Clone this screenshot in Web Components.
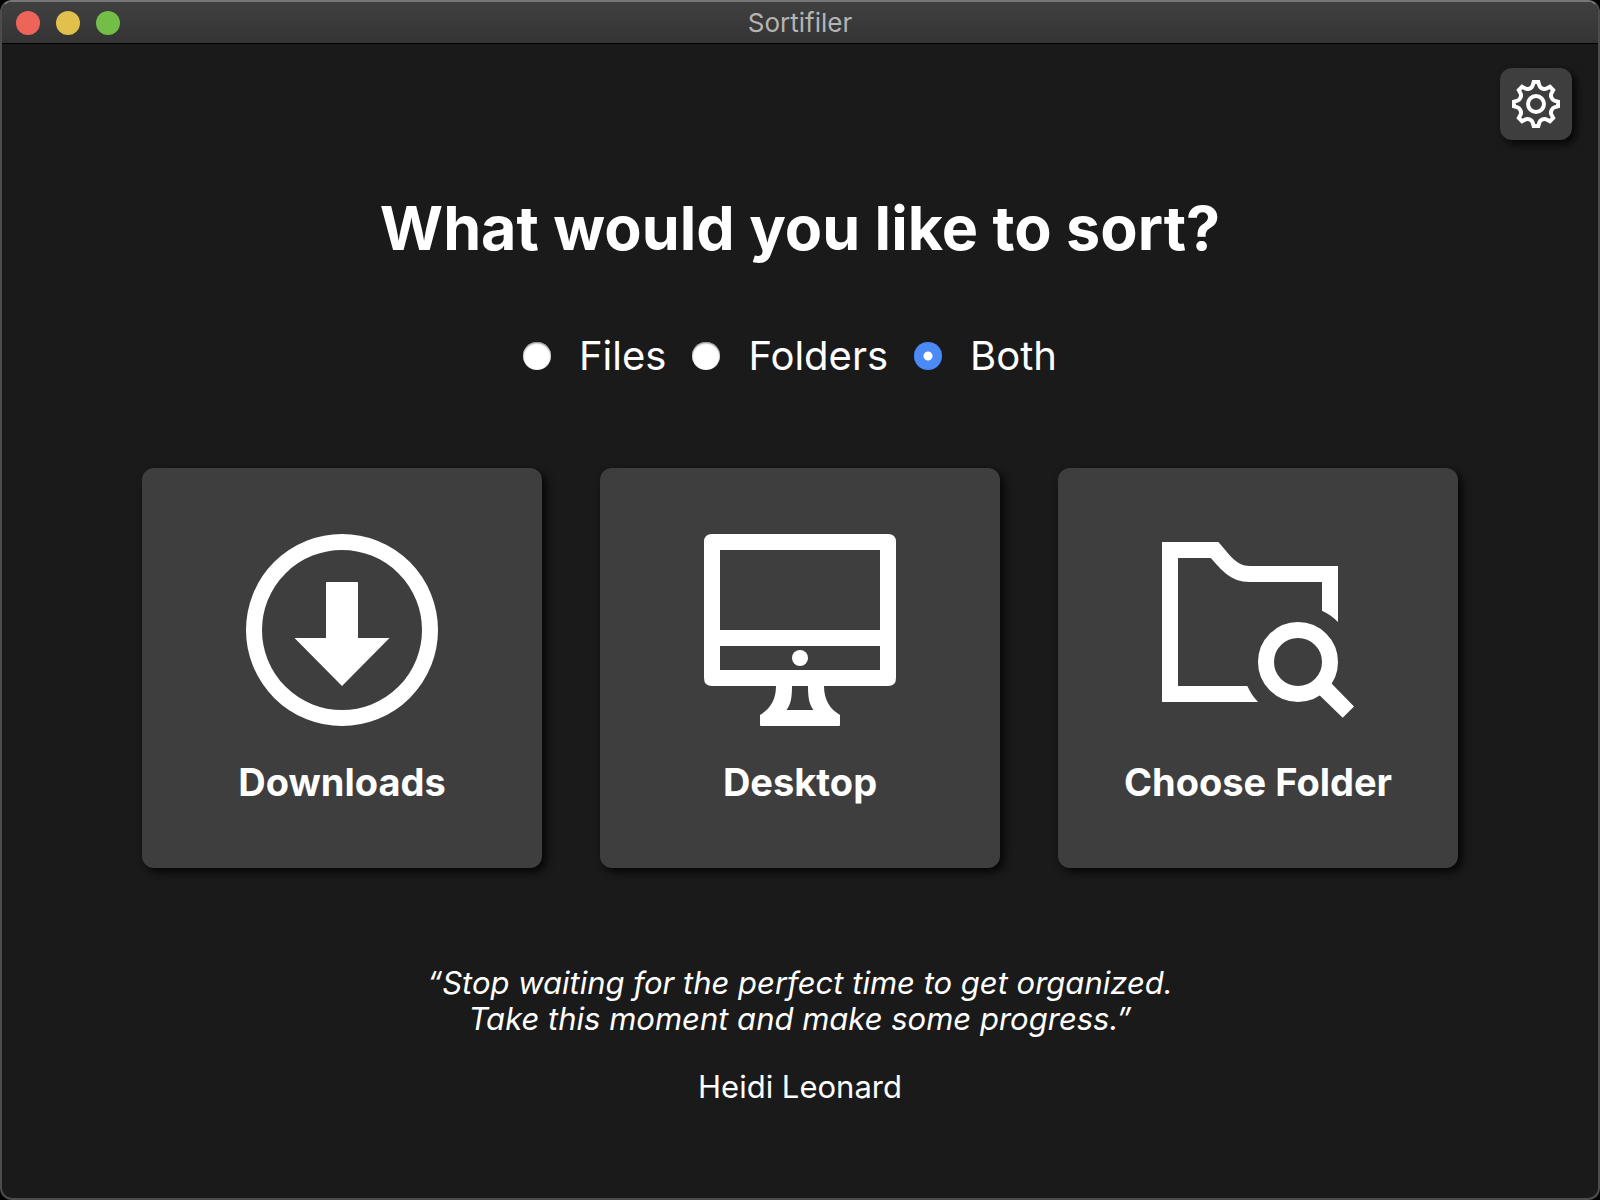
<!DOCTYPE html>
<html lang="en">
<head>
<meta charset="utf-8">
<title>Sortifiler</title>
<style>
  html, body { margin: 0; background: #000; }
  body { font-family: Inter, "Liberation Sans", sans-serif; color: #fff; }
</style>
</head>
<body>
<app-window>
  <title-bar slot="bar">Sortifiler</title-bar>
  <settings-button slot="tools"></settings-button>
  <sort-heading>What would you like to sort?</sort-heading>
  <kind-picker></kind-picker>
  <card-row>
    <folder-card icon="downloads">Downloads</folder-card>
    <folder-card icon="desktop">Desktop</folder-card>
    <folder-card icon="choose">Choose Folder</folder-card>
  </card-row>
  <quote-block>
    “Stop waiting for the perfect time to get organized.<br>Take this moment and make some progress.”
    <span slot="author">Heidi Leonard</span>
  </quote-block>
</app-window>

<script>
const define = (name, html, setup) => customElements.define(name, class extends HTMLElement {
  constructor() {
    super();
    this.attachShadow({ mode: 'open' }).innerHTML = html;
  }
  connectedCallback() { if (setup) setup(this, this.shadowRoot); }
});

define('app-window', `
  <style>
    :host { display: flex; flex-direction: column; box-sizing: border-box; min-height: 100vh;
      background: #1a1a1a; border: 2px solid #4c4c4c; border-top-color: #777; border-radius: 12px; overflow: hidden; }
    .tools { display: flex; justify-content: flex-end; padding: 24px 26px 0; }
    main { display: flex; flex-direction: column; align-items: center; padding: 48px 24px; }
  </style>
  <slot name="bar"></slot>
  <div class="tools"><slot name="tools"></slot></div>
  <main><slot></slot></main>`);

define('title-bar', `
  <style>
    :host { display: grid; grid-template-columns: 1fr auto 1fr; align-items: center; height: 41px;
      padding: 0 14px; background: linear-gradient(#404040, #343434); border-bottom: 1px solid #000;
      color: #b4b4b4; font-size: 26px; line-height: 32px; }
    .lights { display: flex; gap: 16px; }
    button { width: 24px; height: 24px; padding: 0; border: 0; border-radius: 50%; }
    .close { background: #ee6459; }
    .min { background: #e1c04c; }
    .max { background: #72be47; }
  </style>
  <div class="lights">
    <button class="close" aria-label="Close"></button>
    <button class="min" aria-label="Minimize"></button>
    <button class="max" aria-label="Zoom"></button>
  </div>
  <slot></slot>`);

define('settings-button', `
  <style>
    :host { display: block; }
    button { display: grid; place-items: center; width: 72px; height: 72px; padding: 0; border: 0;
      border-radius: 12px; background: #3e3e3e; box-shadow: 4px 4px 8px rgba(0,0,0,.8); }
    svg { width: 48px; height: 48px; display: block; }
  </style>
  <button aria-label="Settings">
    <svg viewBox="-24 -24 48 48" fill="none" stroke="#fff" stroke-width="4">
      <path class="teeth"/><circle r="8"/>
    </svg>
  </button>`, (el, root) => {
  // One tooth and the valley after it, repeated every 45 degrees.
  const tooth = [[-2.3, -22], [2.3, -22], [3.4, -18.4], [4.2, -15.8]];
  const turn = ([x, y], a) => {
    const c = Math.cos(a), s = Math.sin(a);
    return (x * c - y * s).toFixed(2) + ' ' + (x * s + y * c).toFixed(2);
  };
  let d = '';
  for (let i = 0; i < 8; i++) {
    const a = i * Math.PI / 4, b = a + Math.PI / 4;
    d += (i ? 'L' : 'M') + turn(tooth[0], a) + 'L' + turn(tooth[1], a) + 'L' + turn(tooth[2], a)
      + 'C' + turn(tooth[3], a) + ' ' + turn([-4.2, -15.8], b) + ' ' + turn([-3.4, -18.4], b);
  }
  root.querySelector('.teeth').setAttribute('d', d + 'Z');
});

define('sort-heading', `
  <style>
    :host { display: block; text-align: center; }
    h1 { margin: 0; font-size: 61px; line-height: 80px; font-weight: 700; }
  </style>
  <h1><slot></slot></h1>`);

define('kind-picker', `
  <style>
    :host { display: block; margin-top: 62px; }
    fieldset { display: flex; flex-wrap: wrap; gap: 26px; margin: 0; padding: 0 20px 0 0; border: 0; }
    label { display: flex; align-items: center; gap: 28px; font-size: 40px; line-height: 52px; }
    input { appearance: none; width: 28px; height: 28px; margin: 0; border-radius: 50%;
      background: #fff; box-shadow: inset 0 1px 2px #777; }
    input:checked { background: radial-gradient(circle, #fff 4px, #4c8bf7 5px); box-shadow: inset 0 0 1px #2f6fe0; }
  </style>
  <fieldset aria-label="Items to sort">
    <label for="files"><input type="radio" name="kind" id="files">Files</label>
    <label for="folders"><input type="radio" name="kind" id="folders">Folders</label>
    <label for="both"><input type="radio" name="kind" id="both" checked>Both</label>
  </fieldset>`);

define('card-row', `
  <style>
    :host { display: flex; justify-content: center; gap: 58px; margin-top: 86px; width: 100%; }
  </style>
  <slot></slot>`);

const icons = {
  downloads: `<circle cx="96" cy="96" r="88" fill="none" stroke="#fff" stroke-width="16"/>
    <path d="M81 48H111Q112 48 112 49V104H143.5L96 152L48.5 104H80V49Q80 48 81 48Z"/>`,
  desktop: `<path fill-rule="evenodd" d="M8 0H184Q192 0 192 8V144Q192 152 184 152H120C120 166 126 175 136 181V191Q136 192 135 192H57Q56 192 56 191V181C66 175 72 166 72 152H8Q0 152 0 144V8Q0 0 8 0ZM16 16V96H176V16ZM16 112V136H176V112ZM88 152C88 163 87 170 82.500 176H109.500C105 170 104 163 104 152Z"/>
    <circle cx="96" cy="124" r="8"/>`,
  choose: `<path fill-rule="evenodd" d="M0 8H56.300C66 18 73 32 88 32H176V88C171 83 166 79.500 160 76.700V48H88C68 48 60 36 48.700 24H16V152H85.300C88 158 91.500 163 96 168H0Z"/>
    <path d="M156 159.700L167.800 147.700L192 172.500L180.700 183.700Z"/>
    <circle cx="136" cy="128" r="32" fill="none" stroke="#fff" stroke-width="16"/>`
};

define('folder-card', `
  <style>
    :host { display: block; flex: 0 1 400px; min-width: 0; }
    button { display: flex; flex-direction: column; align-items: center; gap: 32px; width: 100%;
      aspect-ratio: 1; padding: 66px 0 0; border: 0; border-radius: 12px; background: #3e3e3e;
      box-shadow: 4px 4px 8px rgba(0,0,0,.8); color: inherit; font: 700 38px/48px Inter, "Liberation Sans", sans-serif; }
    svg { display: block; width: 192px; height: 192px; fill: #fff; }
  </style>
  <button><svg viewBox="0 0 192 192" aria-hidden="true"></svg><span><slot></slot></span></button>`,
  (el, root) => { root.querySelector('svg').innerHTML = icons[el.getAttribute('icon')]; });

define('quote-block', `
  <style>
    :host { display: block; margin-top: 97px; text-align: center; font-size: 31px; line-height: 36px; }
    figure, blockquote { margin: 0; }
    blockquote { font-style: italic; }
    figcaption { margin-top: 32px; }
  </style>
  <figure>
    <blockquote><slot></slot></blockquote>
    <figcaption><slot name="author"></slot></figcaption>
  </figure>`);
</script>
</body>
</html>
